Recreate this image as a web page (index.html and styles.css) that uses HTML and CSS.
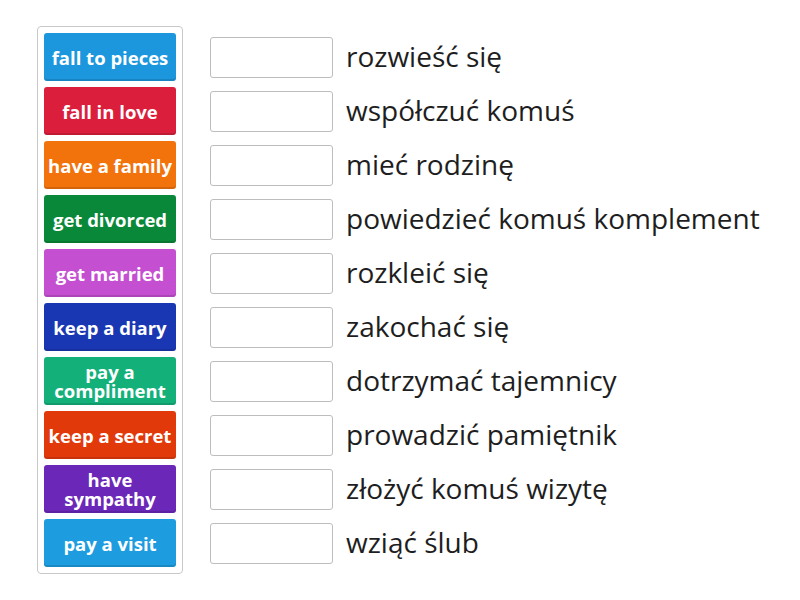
FILE: index.html
```html
<!DOCTYPE html>
<html lang="pl">
<head>
    <meta charset="UTF-8">
    <title>Match up</title>
    <link rel="stylesheet" href="styles.css">
</head>
<body>
    <div class="game">
        <div class="tiles">
            <div class="tile c1">fall to pieces</div>
            <div class="tile c2">fall in love</div>
            <div class="tile c3">have a family</div>
            <div class="tile c4">get divorced</div>
            <div class="tile c5">get married</div>
            <div class="tile c6">keep a diary</div>
            <div class="tile c7">pay a compliment</div>
            <div class="tile c8">keep a secret</div>
            <div class="tile c9">have sympathy</div>
            <div class="tile c10">pay a visit</div>
        </div>
        <div class="targets">
            <div class="row"><div class="slot"></div><span class="label">rozwieść się</span></div>
            <div class="row"><div class="slot"></div><span class="label">współczuć komuś</span></div>
            <div class="row"><div class="slot"></div><span class="label">mieć rodzinę</span></div>
            <div class="row"><div class="slot"></div><span class="label">powiedzieć komuś komplement</span></div>
            <div class="row"><div class="slot"></div><span class="label">rozkleić się</span></div>
            <div class="row"><div class="slot"></div><span class="label">zakochać się</span></div>
            <div class="row"><div class="slot"></div><span class="label">dotrzymać tajemnicy</span></div>
            <div class="row"><div class="slot"></div><span class="label">prowadzić pamiętnik</span></div>
            <div class="row"><div class="slot"></div><span class="label">złożyć komuś wizytę</span></div>
            <div class="row"><div class="slot"></div><span class="label">wziąć ślub</span></div>
        </div>
    </div>
</body>
</html>
```

FILE: styles.css
```css
body {
    margin: 0;
    background: #fff;
    font-family: "Open Sans", "Noto Sans", sans-serif;
    color: #222;
}

.game {
    display: flex;
    align-items: flex-start;
    padding: 26px 0 0 37px;
}

.tiles {
    display: flex;
    flex-direction: column;
    gap: 6px;
    padding: 6px;
    border: 1px solid #c8c8c8;
    border-radius: 4px;
}

    .tiles .tile {
        width: 132px;
        height: 48px;
        box-sizing: border-box;
        display: flex;
        align-items: center;
        justify-content: center;
        text-align: center;
        color: #fff;
        font-weight: 700;
        font-size: 18.5px;
        line-height: 19px;
        border-radius: 3px;
        padding: 0 1px;
        box-shadow: inset 0 -2px 0 rgba(0, 0, 0, 0.12);
    }

.c1 { background-color: #1c97dd; }
.c2 { background-color: #da1e3c; }
.c3 { background-color: #f2720c; }
.c4 { background-color: #0a883a; }
.c5 { background-color: #c54fd1; }
.c6 { background-color: #1a37b3; }
.c7 { background-color: #14b07a; }
.c8 { background-color: #e2390b; }
.c9 { background-color: #6a27b8; }
.c10 { background-color: #1d9ce0; }

.targets {
    display: flex;
    flex-direction: column;
    gap: 6px;
    padding-top: 7px;
    margin-left: 27px;
}

    .targets .row {
        height: 48px;
        display: flex;
        align-items: center;
    }

    .targets .slot {
        width: 123px;
        height: 41px;
        box-sizing: border-box;
        border: 1px solid #bdbdbd;
        border-radius: 3px;
        background: #fff;
    }

    .targets .label {
        margin-left: 13px;
        margin-top: -3px;
        font-size: 28px;
        line-height: 34px;
        color: #1e1e1e;
        white-space: nowrap;
    }
```
